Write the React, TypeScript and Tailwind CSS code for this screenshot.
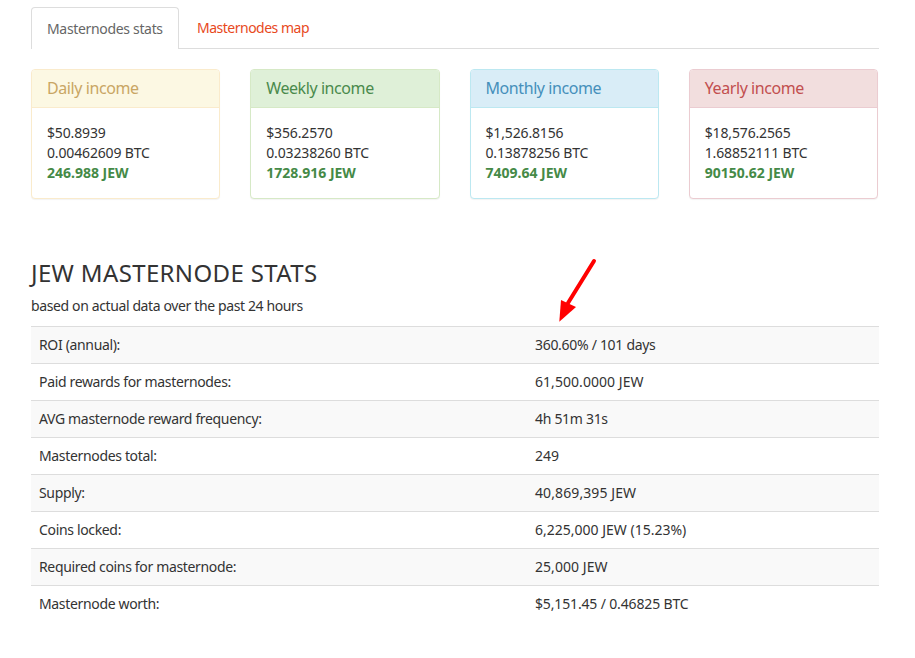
export default function App() {
  const cards = [
    { t: "Daily income", a: "$50.8939", b: "0.00462609 BTC", c: "246.988 JEW", border: "border-[#faebcc]", head: "bg-[#fcf8e3] text-[#c9a664]" },
    { t: "Weekly income", a: "$356.2570", b: "0.03238260 BTC", c: "1728.916 JEW", border: "border-[#d6e9c6]", head: "bg-[#dff0d8] text-[#4a8a4c]" },
    { t: "Monthly income", a: "$1,526.8156", b: "0.13878256 BTC", c: "7409.64 JEW", border: "border-[#bce8f1]", head: "bg-[#d9edf7] text-[#4690bb]" },
    { t: "Yearly income", a: "$18,576.2565", b: "1.68852111 BTC", c: "90150.62 JEW", border: "border-[#ebccd1]", head: "bg-[#f2dede] text-[#c24f4f]" },
  ];
  const rows = [
    ["ROI (annual):", "360.60% / 101 days", "tracking-[-0.3px]"],
    ["Paid rewards for masternodes:", "61,500.0000 JEW", "tracking-[0.05px]"],
    ["AVG masternode reward frequency:", "4h 51m 31s", "tracking-[-0.3px]"],
    ["Masternodes total:", "249", "tracking-[0px]"],
    ["Supply:", "40,869,395 JEW", "tracking-[0.1px]"],
    ["Coins locked:", "6,225,000 JEW (15.23%)", "tracking-[0px]"],
    ["Required coins for masternode:", "25,000 JEW", "tracking-[0.05px]"],
    ["Masternode worth:", "$5,151.45 / 0.46825 BTC", "tracking-[-0.15px]"],
  ];
  return (
    <div className="relative min-h-[658px] bg-white pl-[31px] pr-[36px] pt-[7px] font-['Noto_Sans',sans-serif] text-[14px] leading-[20px] text-[#333333]">
      <div className="flex h-[42px] border-b border-[#dddddd]">
        <div className="h-[42px] w-[148px] whitespace-nowrap rounded-t border border-b-0 border-[#dddddd] bg-white px-[15px] pb-[9px] pt-[11px] tracking-[-0.33px] text-[#666666]">Masternodes stats</div>
        <div className="ml-[3px] px-[15px] pb-[9px] pt-[11px] tracking-[-0.5px] text-[#e8491d]">Masternodes map</div>
      </div>
      <div className="mt-[20px] grid grid-cols-4 gap-[30px] pr-px">
        {cards.map((c) => (
          <div key={c.t} className={`h-[130px] rounded border bg-white shadow-[0_1px_1px_rgba(0,0,0,0.05)] ${c.border}`}>
            <div className={`h-[38px] rounded-t-[3px] border-b px-[15px] py-[7px] text-[16px] leading-[22px] tracking-[-0.42px] ${c.border} ${c.head}`}>{c.t}</div>
            <div className="p-[15px] tracking-[-0.15px]">
              <div>{c.a}</div>
              <div>{c.b}</div>
              <div className="font-bold tracking-[0px] text-[#458a47]">{c.c}</div>
            </div>
          </div>
        ))}
      </div>
      <h2 className="mt-[58px] text-[24px] leading-[32px] tracking-[0.35px]">JEW MASTERNODE STATS</h2>
      <p className="mt-[7px] tracking-[-0.38px]">based on actual data over the past 24 hours</p>
      <table className="mt-[10px] w-full border-collapse">
        <tbody>
          {rows.map((r, i) => (
            <tr key={r[0]} className={i % 2 === 0 ? "bg-[#f9f9f9]" : ""}>
              <td className="w-[496px] border-t border-[#dddddd] p-[8px] tracking-[-0.34px]">{r[0]}</td>
              <td className={`border-t border-[#dddddd] p-[8px] ${r[2]}`}>{r[1]}</td>
            </tr>
          ))}
        </tbody>
      </table>
      <svg className="absolute left-[550px] top-[250px]" width="60" height="80" viewBox="0 0 60 80">
        <path d="M44 11 L18 53" stroke="#ff0000" strokeWidth="4" strokeLinecap="round" fill="none" />
        <path d="M9.3 71.7 L11 50 L26 57 Z" fill="#ff0000" />
      </svg>
    </div>
  );
}
